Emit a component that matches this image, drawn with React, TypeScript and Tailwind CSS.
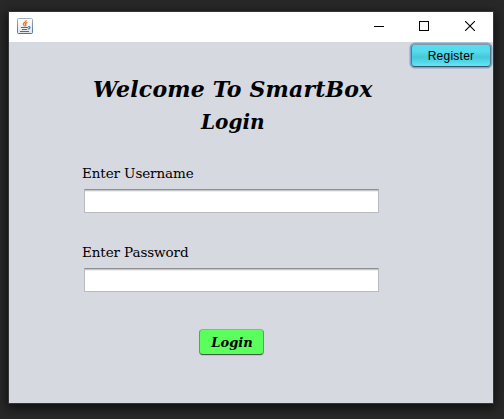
import React from "react";

function JavaIcon() {
  return (
    <svg width="16" height="16" viewBox="0 0 16 16" fill="none">
      <defs>
        <linearGradient id="tile" x1="0" y1="0" x2="0" y2="1">
          <stop offset="0" stopColor="#ffffff" />
          <stop offset="1" stopColor="#dfe5ea" />
        </linearGradient>
        <linearGradient id="edge" x1="0" y1="0" x2="0" y2="1">
          <stop offset="0" stopColor="#a3b4c1" />
          <stop offset="1" stopColor="#4a7596" />
        </linearGradient>
      </defs>
      <rect x="0.5" y="0.5" width="15" height="15" rx="1" fill="url(#tile)" stroke="url(#edge)" />
      <path d="M9.2 2C9.8 4 6 4.6 6.4 6.2C6.6 7.2 7.4 7.5 7.3 8.5M10.5 4.3C8.5 5.2 7.9 5.8 8.8 6.8C9.1 7.3 8.9 7.8 8.4 8.3" stroke="#e67a22" strokeWidth="1.3" />
      <path d="M4 9.5H11M5 11.5H10M3 13.5H12M11 8.8C13.8 8.2 13.6 10.8 10.8 11.2" stroke="#45718f" strokeWidth="1.1" />
    </svg>
  );
}

function TitleBar() {
  return (
    <header className="flex h-[30px] items-start justify-between bg-white pl-2">
      <div className="pt-1.5"><JavaIcon /></div>
      <div className="flex h-[28px] items-center">
        <button aria-label="Minimize" className="flex w-[46px] justify-center">
          <svg width="10" height="10" shapeRendering="crispEdges"><path d="M0 5.5H10" stroke="#000" /></svg>
        </button>
        <button aria-label="Maximize" className="flex w-[44px] justify-center">
          <svg width="10" height="10" shapeRendering="crispEdges"><rect x=".5" y=".5" width="9" height="9" fill="none" stroke="#000" /></svg>
        </button>
        <button aria-label="Close" className="flex w-[47px] justify-end pr-[18px]">
          <svg width="10" height="10"><path d="M0 0L10 10M10 0L0 10" stroke="#000" strokeWidth="1.1" /></svg>
        </button>
      </div>
    </header>
  );
}

function Field({ label, type }: { label: string; type: string }) {
  return (
    <label className="flex h-[79px] flex-col">
      <span className="h-[25px] pl-[73px] text-[13.5px] leading-[19px] tracking-[-0.1px] whitespace-nowrap">{label}</span>
      <input
        type={type}
        className="ml-[75px] h-[24px] w-[295px] border border-[#b9babd] border-t-[#8d8e91] bg-white px-1 shadow-[inset_0_1px_0_#c6c7c9,inset_0_2px_0_#eeeeef] outline-none"
      />
    </label>
  );
}

export default function App() {
  return (
    <div className="h-[419px] w-[504px] overflow-hidden bg-[#282828] pt-[12px] pl-[9px] font-['DejaVu_Serif',serif] text-black">
      <div className="h-[391px] w-[484px] bg-[#d6d9df] shadow-[0_0_0_1px_#343737,0_3px_10px_2px_rgba(0,0,0,0.65)]">
        <TitleBar />
        <main className="flex flex-col">
          <div className="flex h-[30px] justify-end pt-[2px] pr-[2px]">
            <button className="h-[23px] w-[80px] rounded-[4px] border border-[#577985] border-t-[#7b9ba8] border-b-[#3f5362] bg-[linear-gradient(#59dcef_0%,#54dced_30%,#47c7d9_58%,#5ce8f9_100%)] font-['Liberation_Sans',Arial,sans-serif] text-[12px] leading-[22px] tracking-[0.25px] shadow-[0_0_0_1.5px_#7ba5cf]">
              Register
            </button>
          </div>
          <h1 className="h-[33px] pl-[84px] text-[22px] leading-[34px] font-bold tracking-[0.18px] whitespace-nowrap italic">Welcome To SmartBox</h1>
          <h2 className="h-[59px] pl-[192px] text-[20px] leading-[34px] font-bold whitespace-nowrap italic">Login</h2>
          <Field label="Enter Username" type="text" />
          <Field label="Enter Password" type="password" />
          <button className="mt-[7px] ml-[190px] h-[26px] w-[65px] rounded-[4px] border border-[#589f64] border-t-[#a0a3a7] border-b-[#415b48] bg-[#5bff5b] pl-px text-[13px] leading-[23px] font-bold italic shadow-[0_1px_0_#c0c7c8]">
            Login
          </button>
        </main>
      </div>
    </div>
  );
}
